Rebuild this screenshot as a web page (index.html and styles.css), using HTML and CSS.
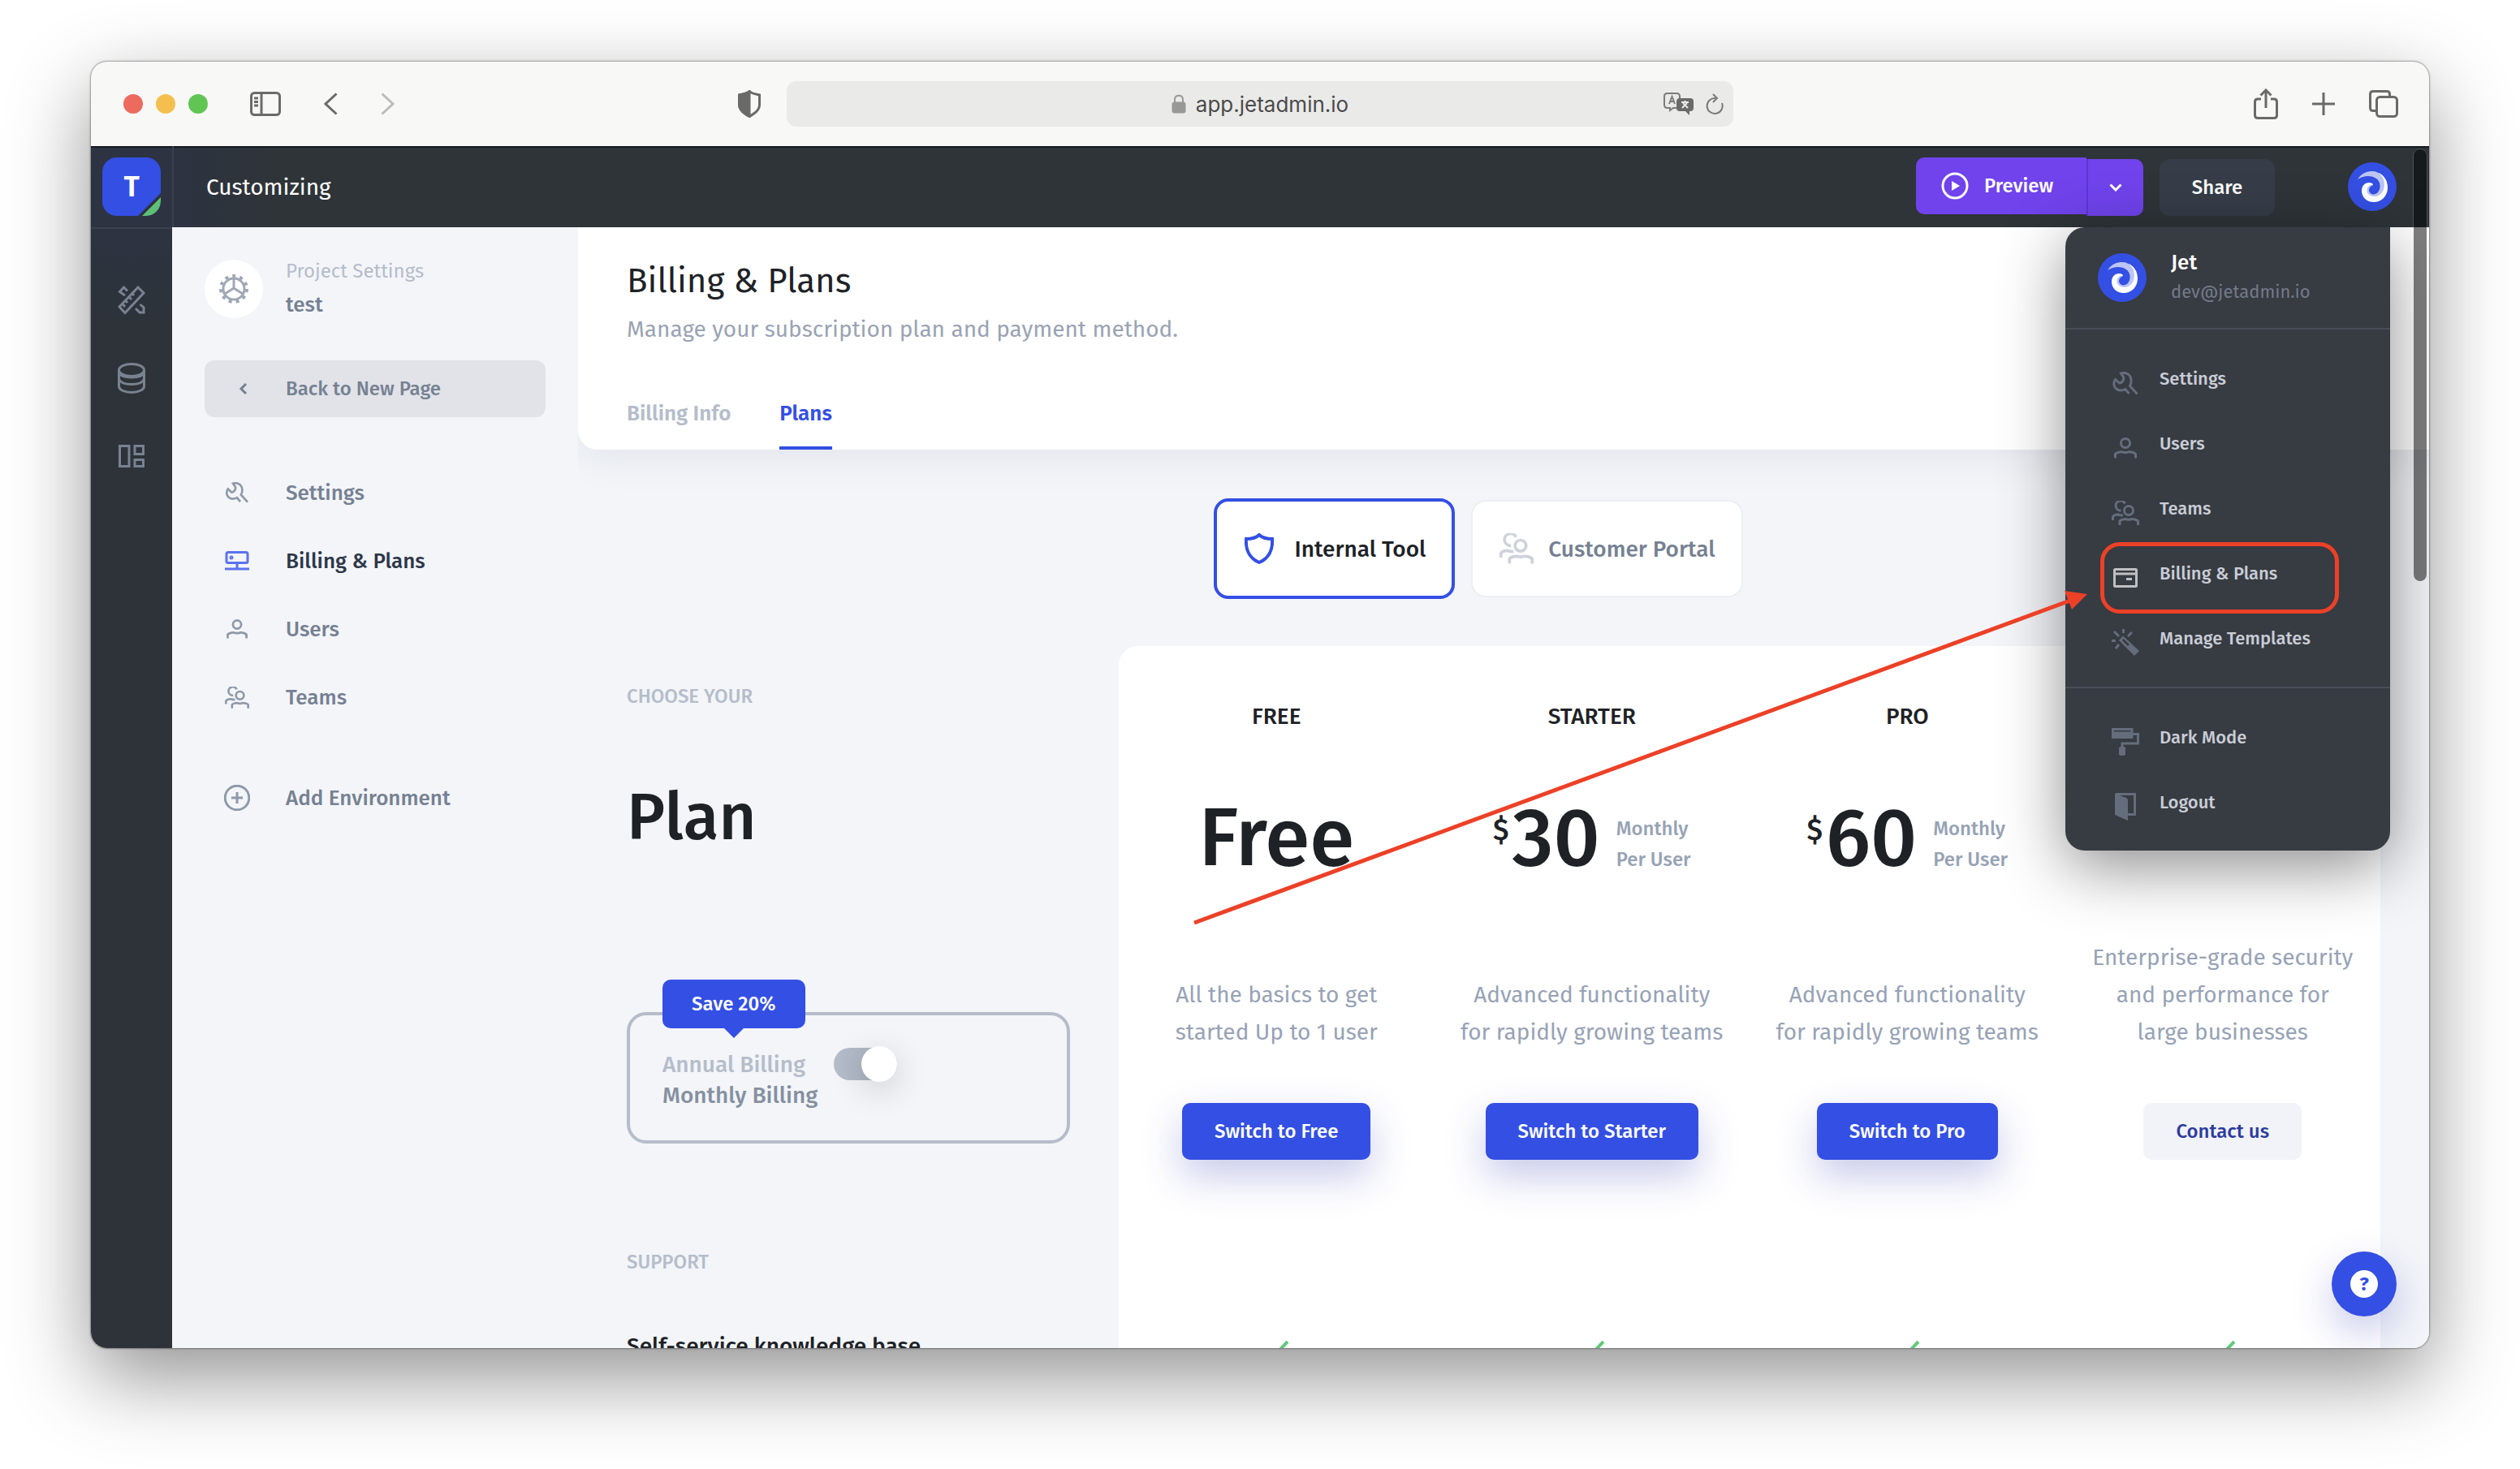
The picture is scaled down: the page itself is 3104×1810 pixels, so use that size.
FILE: index.html
```
<!DOCTYPE html>
<html lang="en">
<head>
<meta charset="utf-8">
<title>Billing &amp; Plans - Jet Admin</title>
<link rel="stylesheet" href="styles.css">
</head>
<body>
<svg class="symbols" aria-hidden="true">
  <symbol id="i-wrench" viewBox="0 0 32 29"><path d="M30.500 27.500L21.500 17.500C24 13 23.500 7 20.500 4C17.500 1.200 13.500 1 10.500 2L13.500 6.500C14.500 10 12.500 13.500 8.500 14L3.500 9.500C1 13 1 18 4.500 20.800C8 23.800 12.500 23.200 16 21.500L20.500 27" /></symbol>
  <symbol id="i-user" viewBox="0 0 28 26"><circle cx="14" cy="7" r="5.500"/><path d="M1.500 25.500V20.500C3 18.500 8 17.500 10 17.800C12 18.600 16 18.600 18 17.800C20 17.500 25 18.500 26.500 20.500V25.500"/></symbol>
  <symbol id="i-team" viewBox="0 0 34 30"><circle cx="21" cy="12" r="5.500"/><path d="M16.500 3.500A6 6 0 1 0 11.500 12"/><path d="M1.500 24V19.500C3 17.500 6 17 8 17C10 17.800 12 18 14 18"/><path d="M10 30V25C11.500 23 16 22.400 17.800 22.600C19.500 23.400 22.500 23.400 24.200 22.600C26 22.400 31 23 32.500 25V30"/></symbol>
  <symbol id="i-swirl" viewBox="0 0 60 60"><circle cx="30" cy="30" r="30" fill="#344fe3"/><path fill="#fff" d="M38 13C45 16 49 23 49 31C49 42 41 49 32 49C23 49 17 43 17 35C17 29 21 25 26 25C29 25 31 26 31 28C26 28 24 31 24 34.500C24 38.500 27 41 32 41C38 41 42 36 42 30Z"/><path fill="#bcc5f7" d="M12 21C17 13 24 11 30 11C40 11 45 19 45 28C45 36 39 42 33 42C27 42 23 38 23.500 34C24 30 27 28 31 28C27 30 26 32 26 35C27 38 29 39.500 32 39.500C37 39 40 34 39.500 28C39 18 24 13 12 21Z"/></symbol>
</svg>

<div class="browser">
  <div class="toolbar">
    <div class="toolbar-side">
      <div class="lights"><span class="light red"></span><span class="light yellow"></span><span class="light green"></span></div>
      <div class="nav-tools">
        <button aria-label="Show sidebar"><svg width="38" height="30" viewBox="0 0 38 30"><rect x="1.500" y="1.500" width="35" height="27" rx="4"/><path d="M14 2V28M5 8H10M5 12.500H10M5 17H10"/></svg></button>
        <button aria-label="Back"><svg width="17" height="28" viewBox="0 0 17 28"><path d="M15.500 1.500L2 14L15.500 26.500"/></svg></button>
        <button aria-label="Forward" class="off"><svg width="17" height="28" viewBox="0 0 17 28"><path d="M1.500 1.500L15 14L1.500 26.500"/></svg></button>
      </div>
      <button class="shield" aria-label="Privacy report"><svg width="28" height="34" viewBox="0 0 28 34"><path d="M14 1.500C17 4.500 22 5 26.500 6V18C26.500 25 20 29 14 32.500C8 29 1.500 25 1.500 18V6C6 5 11 4.500 14 1.500Z"/><path fill="#6a6a69" d="M14 2V32C8 29 2 25 2 18V6C6 5 11 4.500 14 2Z"/></svg></button>
    </div>
    <div class="address">
      <span></span>
      <button class="url"><svg width="18" height="24" viewBox="0 0 18 24"><rect x="1" y="10" width="16" height="13" rx="2" fill="#989897" stroke="#989897" stroke-width="1"/><path stroke="#989897" stroke-width="2" d="M4 11V6.500C4 0 14 0 14 6.500V11"/></svg>app.jetadmin.io</button>
      <div class="address-tools">
        <button aria-label="Translate"><svg width="38" height="28" viewBox="0 0 38 28"><g stroke-width="2"><path d="M16 19H12L8 22V19H5Q1 19 1 15V5Q1 1 5 1H16Q20 1 20 5V8"/><path d="M7 14L10.500 5L14 14M8.500 11H12.500"/></g><path fill="#6a6a69" stroke="none" d="M20 7H33Q37 7 37 11V19Q37 23 33 23H32V28L27 23H20Q16 23 16 19V11Q16 7 20 7Z"/><path stroke="#eaeae9" stroke-width="2" d="M22 12H31M26.500 10V12M24 13L30 19M29 13L23 19"/></svg></button>
        <button aria-label="Reload"><svg width="22" height="26" viewBox="0 0 22 26"><path stroke-width="2" d="M12 6A9.500 9.500 0 1 0 20 12M9 1L14 6L9 11"/></svg></button>
      </div>
    </div>
    <div class="toolbar-side end">
      <button aria-label="Share page"><svg width="30" height="38" viewBox="0 0 30 38"><path d="M9 13H5Q1.500 13 1.500 16.500V33Q1.500 36.500 5 36.500H25Q28.500 36.500 28.500 33V16.500Q28.500 13 25 13H21M15 24V2M8.500 8.500L15 2L21.500 8.500"/></svg></button>
      <button aria-label="New tab"><svg width="28" height="28" viewBox="0 0 28 28"><path d="M14 0V28M0 14H28"/></svg></button>
      <button aria-label="Tab overview"><svg width="36" height="34" viewBox="0 0 36 34"><rect x="9.500" y="8.500" width="25" height="24" rx="4"/><path d="M9 25.500H5Q1.500 25.500 1.500 22V5Q1.500 1.500 5 1.500H22Q25.500 1.500 25.500 5V8"/></svg></button>
    </div>
  </div>

  <div class="app">
    <nav class="rail">
      <div class="rail-logo"><a href="#" class="tile" aria-label="test project">T<svg width="28" height="28" viewBox="0 0 28 28"><path d="M0 28L28 0V28Z" fill="#2d333b"/><path d="M5 28L28 5V10A18 18 0 0 1 10 28Z" fill="#5fbf77"/></svg></a></div>
      <a href="#" aria-label="Design"><svg width="34" height="36" viewBox="0 0 34 36"><path d="M25 2L32 9L9 33.500L2 26ZM13 13L17 17M17.500 9L20 12M9 18L12 21M5.500 22L9 26M9 12L2.500 7.500L7.500 2L12 6.500M22 28L27 33H32V27L27.500 23"/></svg></a>
      <a href="#" aria-label="Data"><svg width="34" height="38" viewBox="0 0 34 38"><ellipse cx="17" cy="9" rx="15.500" ry="7.500"/><path d="M1.500 9V29C1.500 33 8 36.500 17 36.500S32.500 33 32.500 29V9M1.500 12C3 16 9 18 17 18S31 16 32.500 12M1.500 20C3 24 9 26.500 17 26.500S31 24 32.500 20"/></svg></a>
      <a href="#" aria-label="Layout"><svg width="32" height="28" viewBox="0 0 32 28"><path d="M1.500 1.500H13V26.500H1.500ZM20 1.500H30.500V11.500H20ZM20 18.500H30.500V26.500H20Z"/></svg></a>
    </nav>

    <header class="topbar">
      <span class="mode">Customizing</span>
      <div class="actions">
        <div class="split">
          <button class="preview"><svg width="34" height="34" viewBox="0 0 34 34"><circle cx="17" cy="17" r="15"/><path fill="#fff" stroke="none" d="M13 11L23 17L13 23Z"/></svg>Preview</button>
          <button class="caret" aria-label="Preview options"><svg width="16" height="10" viewBox="0 0 16 10"><path d="M1.500 1.500L8 8L14.500 1.500"/></svg></button>
        </div>
        <button class="share">Share</button>
      </div>
      <button class="avatar" aria-label="Account"><svg width="60" height="60"><use href="#i-swirl"/></svg></button>
    </header>

    <aside class="sidebar">
      <div class="project">
        <span class="gear"><svg width="36" height="36" viewBox="0 0 36 36"><circle cx="18" cy="18" r="13"/><circle cx="18" cy="18" r="16" stroke-width="4" stroke-dasharray="4 5.140"/><path d="M18 5V17L7 24M18 17L29 24"/></svg></span>
        <div class="project-name"><span class="muted">Project Settings</span><strong>test</strong></div>
      </div>
      <button class="back"><svg width="96" height="16" viewBox="0 0 96 16"><path d="M51 2L45 8L51 14"/></svg>Back to New Page</button>
      <ul class="side-nav">
        <li><a href="#"><svg width="30" height="26"><use href="#i-wrench"/></svg>Settings</a></li>
        <li><a href="#" class="current"><svg width="30" height="24" viewBox="0 0 30 24"><rect x="2" y="1.500" width="26" height="13" rx="2"/><path d="M15 15V21M0 22H30"/><circle cx="8" cy="8" r="1"/></svg>Billing &amp; Plans</a></li>
        <li><a href="#"><svg width="26" height="24"><use href="#i-user"/></svg>Users</a></li>
        <li><a href="#"><svg width="30" height="27"><use href="#i-team"/></svg>Teams</a></li>
        <li class="apart"><a href="#"><svg width="32" height="32" viewBox="0 0 32 32"><circle cx="16" cy="16" r="14.800"/><path d="M16 9V23M9 16H23"/></svg>Add Environment</a></li>
      </ul>
    </aside>

    <main class="content">
      <section class="page-head">
        <h1>Billing &amp; Plans</h1>
        <p>Manage your subscription plan and payment method.</p>
        <nav class="tabs"><a href="#">Billing Info</a><a href="#" class="current">Plans</a></nav>
      </section>

      <div class="products">
        <button class="product selected"><svg width="36" height="38" viewBox="0 0 36 38"><path d="M18 2C22 6 28 7 34 7C35 20 30 31 18 36C6 31 1 20 2 7C8 7 14 6 18 2Z"/></svg>Internal Tool</button>
        <button class="product"><svg width="42" height="38"><use href="#i-team"/></svg>Customer Portal</button>
      </div>

      <div class="pricing">
        <div class="chooser">
          <span class="eyebrow">CHOOSE YOUR</span>
          <h2>Plan</h2>
          <div class="billing-box">
            <span class="save">Save 20%</span>
            <label class="period" for="period"><span>Annual Billing</span><strong>Monthly Billing</strong></label>
            <input type="checkbox" role="switch" id="period" class="switch" checked>
          </div>
          <span class="eyebrow support">SUPPORT</span>
          <h3>Self-service knowledge base</h3>
        </div>
        <div class="plans">
          <article class="plan">
            <h3>FREE</h3>
            <div class="price"><b>Free</b></div>
            <p>All the basics to get<br>started Up to 1 user</p>
            <button class="primary">Switch to Free</button>
            <svg class="check" width="32" height="24" viewBox="0 0 32 24"><path d="M2 12L11 21L30 1"/></svg>
          </article>
          <article class="plan">
            <h3>STARTER</h3>
            <div class="price"><sup>$</sup><b>30</b><small>Monthly<br>Per User</small></div>
            <p>Advanced functionality<br>for rapidly growing teams</p>
            <button class="primary">Switch to Starter</button>
            <svg class="check" width="32" height="24" viewBox="0 0 32 24"><path d="M2 12L11 21L30 1"/></svg>
          </article>
          <article class="plan">
            <h3>PRO</h3>
            <div class="price"><sup>$</sup><b>60</b><small>Monthly<br>Per User</small></div>
            <p>Advanced functionality<br>for rapidly growing teams</p>
            <button class="primary">Switch to Pro</button>
            <svg class="check" width="32" height="24" viewBox="0 0 32 24"><path d="M2 12L11 21L30 1"/></svg>
          </article>
          <article class="plan">
            <h3></h3>
            <div class="price"></div>
            <p>Enterprise-grade security<br>and performance for<br>large businesses</p>
            <button class="primary plain">Contact us</button>
            <svg class="check" width="32" height="24" viewBox="0 0 32 24"><path d="M2 12L11 21L30 1"/></svg>
          </article>
        </div>
      </div>
    </main>

    <div class="menu">
      <div class="account">
        <svg width="60" height="60"><use href="#i-swirl"/></svg>
        <div><strong>Jet</strong><span>dev@jetadmin.io</span></div>
      </div>
      <ul>
        <li><a href="#"><svg width="32" height="29"><use href="#i-wrench"/></svg>Settings</a></li>
        <li><a href="#"><svg width="28" height="26"><use href="#i-user"/></svg>Users</a></li>
        <li><a href="#"><svg width="34" height="30"><use href="#i-team"/></svg>Teams</a></li>
        <li><a href="#" class="lit"><svg width="30" height="24" viewBox="0 0 30 24"><rect x="1.500" y="1.500" width="27" height="21" rx="1"/><path d="M2 7H28M16 13.500H23"/></svg>Billing &amp; Plans</a></li>
        <li><a href="#"><svg width="34" height="34" viewBox="0 0 34 34"><path d="M14.500 0V5M3 3L9 9M25 4L20 9M0 14.500H5M9 19L5 24"/><path fill="#646d7c" stroke="none" fill-rule="evenodd" d="M14 8.500L34 27L28 33L9 14ZM14.500 12L13 14L20 21L22 19Z"/></svg>Manage Templates</a></li>
      </ul>
      <ul>
        <li><a href="#"><svg width="34" height="34" viewBox="0 0 34 34"><path d="M1.500 1.500H25V6H1.500ZM25 7.500H32.500V19H13V24"/><path fill="#646d7c" stroke="none" d="M0 6H26.500V13H0ZM11 23H15Q17 23 17 25V32Q17 34 15 34H11Q9 34 9 32V25Q9 23 11 23Z"/></svg>Dark Mode</a></li>
        <li><a href="#"><svg width="26" height="34" viewBox="0 0 26 34"><path d="M1 1.500H24.500V26.500H16"/><path fill="#646d7c" stroke="none" d="M0 1L14 6Q16 7 16 9V34L0 27Z"/></svg>Logout</a></li>
      </ul>
      <span class="highlight"></span>
    </div>

    <svg class="pointer" width="1120" height="430" viewBox="0 0 1120 430" aria-hidden="true"><path d="M11 417L1090 20" stroke="#ec4127" stroke-width="5"/><path d="M1111 12L1083 8L1092 31Z" fill="#ec4127"/></svg>
    <button class="help" aria-label="Help"><span>?</span></button>
    <span class="scroll-thumb"></span>
  </div>
</div>
</body>
</html>
```
FILE: styles.css
```
* { box-sizing: border-box; }
body {
  margin: 0;
  height: 100vh;
  padding: 76px 112px 149px;
  background: #fff;
  font-family: "Fira Sans", "Noto Sans", sans-serif;
  font-size: 26px;
  color: #1e2226;
}
h1, h2, h3, p, ul { margin: 0; padding: 0; font-weight: 500; }
ul { list-style: none; }
a { color: inherit; text-decoration: none; }
button { border: 0; padding: 0; background: none; font: inherit; color: inherit; }
strong, b { font-weight: 500; }
svg { display: block; flex: none; fill: none; stroke: currentColor; stroke-width: 3; }
.symbols { position: absolute; width: 0; height: 0; }
.avatar svg, .account svg { stroke: none; }

.browser {
  height: 100%;
  display: flex;
  flex-direction: column;
  border-radius: 20px;
  overflow: hidden;
  background: #f8f8f6;
  box-shadow: 0 0 2px 1px rgba(0, 0, 0, .35), 0 36px 100px rgba(0, 0, 0, .43);
}

/* Browser toolbar */
.toolbar {
  flex: none;
  height: 104px;
  display: grid;
  grid-template-columns: 1fr minmax(0, 1166px) 1fr;
  align-items: center;
  color: #6a6a69;
}
.toolbar-side { display: flex; align-items: center; padding: 0 32px 0 40px; }
.toolbar-side.end { justify-content: flex-end; gap: 42px; padding: 0 38px; }
.lights { display: flex; gap: 16px; margin-right: 52px; }
.light { width: 24px; height: 24px; border-radius: 50%; }
.red { background: #ed6a5e; }
.yellow { background: #f5bf4f; }
.green { background: #61c554; }
.nav-tools { display: flex; align-items: center; gap: 53px; }
.off { color: #bcbcba; }
.shield { margin-left: auto; }
.address {
  height: 56px;
  border-radius: 12px;
  background: #eaeae9;
  display: grid;
  grid-template-columns: 1fr auto 1fr;
  align-items: center;
  padding: 0 12px;
}
.url { display: flex; align-items: center; gap: 12px; font: 26px "Inter", sans-serif; color: #4a4a4a; }
.address-tools { display: flex; gap: 14px; justify-content: flex-end; color: #7b7b7a; }

/* App frame */
.app {
  position: relative;
  flex: 1;
  min-height: 0;
  display: grid;
  grid-template: 100px minmax(0, 1fr) / 100px 500px minmax(0, 1fr);
  background: #f3f5f9;
}
.rail {
  grid-row: 1 / 3;
  background: radial-gradient(circle at 50px 50px, #2d3342 40px, #2d3338 180px);
  color: #788291;
  display: flex;
  flex-direction: column;
  box-shadow: inset 0 2px #141a22;
}
.rail > a { height: 96px; display: grid; place-items: center; }
.rail-logo { height: 102px; margin-bottom: 40px; border-bottom: 2px solid #3b414d; display: grid; place-items: center; }
.tile {
  position: relative;
  width: 72px;
  height: 72px;
  border-radius: 18px;
  overflow: hidden;
  background: #344fe3;
  color: #fff;
  font-size: 36px;
  font-weight: 600;
  line-height: 72px;
  text-align: center;
}
.tile svg { position: absolute; right: 0; bottom: 0; stroke: none; }

.topbar {
  grid-column: 2 / 4;
  display: flex;
  align-items: center;
  padding: 0 40px;
  box-shadow: inset 0 2px #141a22;
  border-left: 2px solid #3b414d;
  background: linear-gradient(90deg, #2d3340, #2e3438 130px);
  color: #fff;
}
.mode { font-size: 28px; }
.actions { display: flex; gap: 20px; margin: 0 90px 0 auto; align-items: flex-end; font-size: 24px; font-weight: 500; }
.split { display: flex; align-items: flex-start; }
.preview, .caret { height: 70px; background: #7043ec; }
.preview { width: 210px; display: flex; align-items: center; gap: 19px; padding-left: 31px; border-radius: 10px 0 0 10px; }
.caret { width: 70px; margin-top: 2px; display: grid; place-items: center; border-left: 2px solid #5f33d8; border-radius: 0 10px 10px 0; }
.share { width: 142px; height: 70px; border-radius: 12px; background: #363d48; }

/* Project sidebar */
.sidebar { padding: 34px 40px; color: #768192; font-weight: 500; }
.project { display: flex; gap: 28px; height: 80px; margin-bottom: 50px; }
.gear { width: 72px; height: 72px; margin-top: 6px; border-radius: 50%; background: #fff; color: #a0a7b5; display: grid; place-items: center; }
.project-name { display: flex; flex-direction: column; gap: 2px; line-height: 40px; }
.muted { font-size: 24px; font-weight: 400; color: #b5bdca; }
.back {
  width: 420px;
  height: 70px;
  display: flex;
  align-items: center;
  gap: 4px;
  border-radius: 12px;
  background: #e1e3e8;
  font-size: 24px;
  margin-bottom: 50px;
}
.side-nav a { height: 84px; padding-top: 2px; display: grid; grid-template-columns: 80px auto; column-gap: 20px; align-items: center; }
.side-nav svg { justify-self: center; stroke-width: 3px; color: #8f99a8; }
.side-nav .apart { margin-top: 40px; }
.side-nav .current { color: #2d3748; }
.side-nav .current svg { color: #5b73ec; }

/* Page */
.content { min-width: 0; overflow: hidden; }
.page-head {
  padding: 38px 60px 0;
  background: #fff;
  border-bottom-left-radius: 24px;
  box-shadow: 0 10px 50px rgba(30, 40, 60, .08);
}
.page-head h1 { font-size: 42px; line-height: 56px; font-weight: 400; }
.page-head p { margin-top: 12px; font-size: 28px; line-height: 40px; font-weight: 400; color: #9aa3b3; }
.tabs { display: flex; gap: 60px; margin-top: 64px; font-weight: 600; line-height: 40px; color: #b5bdca; }
.tabs a { padding-bottom: 20px; border-bottom: 4px solid transparent; }
.tabs .current { color: #344fe3; border-color: #344fe3; }

.products { display: flex; justify-content: center; align-items: center; gap: 20px; padding: 60px 62px 58px 0; }
.product {
  height: 120px;
  padding: 0 33px;
  display: flex;
  align-items: center;
  gap: 18px;
  border: 2px solid #eceef4;
  border-radius: 18px;
  background: #fff;
  font-size: 28px;
  font-weight: 500;
  color: #768192;
}
.product svg { color: #ced2da; stroke-width: 3px; }
.product.selected { height: 124px; padding: 0 32px 0 34px; gap: 26px; border: 4px solid #344fe3; color: #1e2226; }
.product.selected svg { color: #344fe3; stroke-width: 4px; }

.pricing { display: grid; grid-template-columns: 606px minmax(0, 1fr); padding: 0 60px; }
.chooser { padding: 46px 60px 0 0; display: flex; flex-direction: column; }
.eyebrow { font-size: 24px; line-height: 32px; color: #b5bdca; font-weight: 500; }
.chooser h2 { font-size: 80px; line-height: 96px; margin: 85px 0 192px; }
.billing-box {
  position: relative;
  height: 162px;
  display: flex;
  gap: 20px;
  padding: 40px 40px 0;
  border: 4px solid #b5bdca;
  border-radius: 24px;
}
.save {
  position: absolute;
  left: 40px;
  top: -44px;
  padding: 0 36px;
  border-radius: 10px;
  background: #344fe3;
  color: #fff;
  font-size: 24px;
  line-height: 60px;
  font-weight: 500;
}
.save::after {
  content: "";
  position: absolute;
  left: 50%;
  top: 100%;
  margin-left: -12px;
  border: 12px solid transparent;
  border-top-color: #344fe3;
  border-bottom: 0;
}
.period { display: flex; flex-direction: column; padding-top: 2px; font-size: 28px; line-height: 38px; font-weight: 500; color: #b5bdca; }
.period strong { color: #8690a0; }
.switch {
  appearance: none;
  margin: 0;
  width: 78px;
  height: 40px;
  border-radius: 20px;
  background: linear-gradient(90deg, #b5bdca, #a9b1bf);
  display: flex;
  align-items: center;
  justify-content: flex-end;
}
.switch::before {
  content: "";
  width: 44px;
  height: 44px;
  flex: none;
  border-radius: 50%;
  background: #fff;
  box-shadow: 0 10px 40px rgba(0, 0, 0, .18);
}
.support { margin-top: 130px; }
.chooser h3 { margin-top: 68px; font-size: 28px; line-height: 40px; }

.plans { display: grid; grid-template-columns: repeat(4, 1fr); background: #fff; border-top-left-radius: 24px; }
.plan { display: flex; flex-direction: column; align-items: center; padding-top: 67px; text-align: center; }
.plan h3 { height: 40px; font-size: 28px; line-height: 40px; }
.price { height: 100px; margin-top: 80px; display: flex; align-items: center; line-height: 100px; }
.price b { font-size: 100px; }
.price sup { font-size: 36px; line-height: 80px; align-self: flex-start; margin-right: 4px; font-weight: 500; }
.price small { margin-left: 20px; font-size: 24px; line-height: 38px; font-weight: 500; color: #97a2b5; text-align: left; padding-top: 14px; }
.plan p { height: 212px; display: flow-root; align-content: end; font-size: 28px; line-height: 46px; font-weight: 400; color: #97a2b5; }
.primary {
  height: 70px;
  margin-top: 64px;
  padding: 0 40px;
  border-radius: 10px;
  background: #344fe3;
  color: #fff;
  font-size: 24px;
  font-weight: 500;
  box-shadow: 0 20px 50px rgba(50, 60, 180, .28);
}
.primary.plain { background: #f2f3f8; color: #2c3b9e; box-shadow: none; }
.check { margin-top: 223px; color: #62c97c; stroke-width: 4; }

/* Account menu */
.menu {
  position: absolute;
  top: 100px;
  right: 48px;
  width: 400px;
  border-radius: 24px 0 24px 24px;
  background: #373b42;
  box-shadow: 0 20px 80px rgba(0, 0, 0, .45);
  color: #c9cdd6;
  font-size: 22px;
  font-weight: 500;
}
.account { display: flex; gap: 30px; align-items: center; height: 124px; padding: 0 40px; }
.account div { display: flex; flex-direction: column; line-height: 36px; }
.account strong { font-size: 26px; color: #fff; }
.account span { font-size: 22px; font-weight: 400; color: #727a89; }
.menu ul { padding: 20px 0 20px; border-top: 2px solid #484d57; }
.menu li a { height: 80px; display: grid; grid-template-columns: 68px auto; column-gap: 8px; justify-content: start; align-items: center; padding-left: 40px; }
.menu li svg { justify-self: center; margin-top: 12px; color: #646d7c; }
.menu .lit svg { color: #bfc0c2; }
.highlight { position: absolute; left: 43px; top: 388px; width: 294px; height: 88px; border: 5px solid #ec4127; border-radius: 24px; }

.pointer { position: absolute; right: 412px; top: 540px; stroke: none; }
.help {
  position: absolute;
  right: 40px;
  bottom: 39px;
  width: 80px;
  height: 80px;
  border-radius: 50%;
  background: #344fe3;
  display: grid;
  place-items: center;
  box-shadow: 0 20px 50px rgba(50, 60, 180, .28);
}
.help span { width: 34px; height: 34px; border-radius: 50%; background: #fff; color: #344fe3; font-size: 24px; line-height: 34px; font-weight: 700; }
.scroll-thumb { position: absolute; top: 4px; right: 3px; width: 16px; height: 532px; border-radius: 8px; background: rgba(0, 0, 0, .5); box-shadow: 0 0 0 1px rgba(255, 255, 255, .15); }
```
